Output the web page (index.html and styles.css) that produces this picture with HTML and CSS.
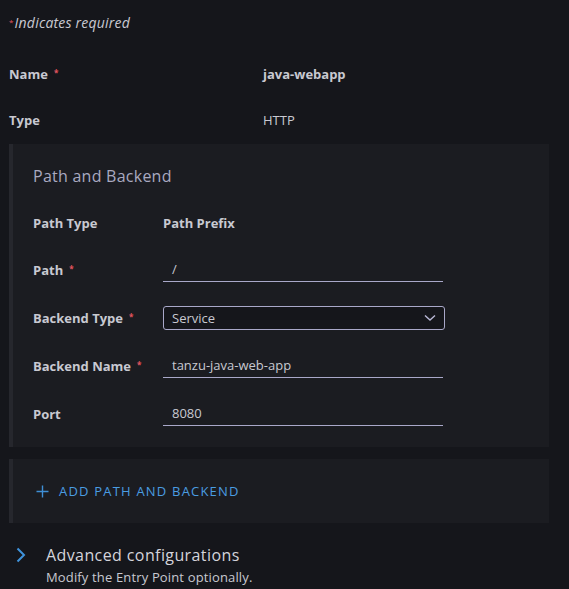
FILE: index.html
```html
<!DOCTYPE html>
<html>
<head>
<meta charset="utf-8">
<link rel="stylesheet" href="styles.css">
</head>
<body>
<div class="page">
  <p class="note"><span class="req">*</span>Indicates required</p>

  <div class="top-rows">
    <div class="row top">
      <span class="label">Name<span class="req label-req">*</span></span>
      <span class="value bold">java-webapp</span>
    </div>
    <div class="row top">
      <span class="label">Type</span>
      <span class="value">HTTP</span>
    </div>
  </div>

  <section class="panel main">
    <h2 class="panel-title">Path and Backend</h2>
    <div class="fields">
      <div class="row field first">
        <span class="label">Path Type</span>
        <span class="value bold">Path Prefix</span>
      </div>
      <div class="row field">
        <span class="label">Path<span class="req label-req">*</span></span>
        <span class="input">/</span>
      </div>
      <div class="row field">
        <span class="label">Backend Type<span class="req label-req">*</span></span>
        <span class="select">Service
          <svg class="caret" width="12" height="8" viewBox="0 0 12 8"><path d="M1 1.5 L6 6 L11 1.5" fill="none" stroke="#b9b8d6" stroke-width="1.4"/></svg>
        </span>
      </div>
      <div class="row field">
        <span class="label">Backend Name<span class="req label-req">*</span></span>
        <span class="input">tanzu-java-web-app</span>
      </div>
      <div class="row field">
        <span class="label">Port</span>
        <span class="input">8080</span>
      </div>
    </div>
  </section>

  <section class="panel add">
    <button class="add-btn">
      <svg width="13" height="13" viewBox="0 0 13 13"><path d="M6.5 0.5 V12.5 M0.5 6.5 H12.5" stroke="#3f8fd6" stroke-width="1.4"/></svg>
      <span>ADD PATH AND BACKEND</span>
    </button>
  </section>

  <div class="advanced">
    <svg class="chev" width="10" height="16" viewBox="0 0 10 16"><path d="M1.5 1.5 L8 8 L1.5 14.5" fill="none" stroke="#3f93dc" stroke-width="2"/></svg>
    <div class="adv-text">
      <div class="adv-title">Advanced configurations</div>
      <div class="adv-sub">Modify the Entry Point optionally.</div>
    </div>
  </div>
</div>
</body>
</html>
```

FILE: styles.css
```css
html, body {
  margin: 0;
  padding: 0;
  background: #15161b;
}
body {
  font-family: "Open Sans", "Noto Sans", sans-serif;
  color: #d2d2da;
  width: 569px;
  height: 589px;
  overflow: hidden;
}
.page {
  padding: 13px 20px 0 9px;
}
.note {
  margin: 0;
  font-size: 14px;
  line-height: 20px;
  font-style: italic;
  color: #c9c9d2;
  letter-spacing: 0.2px;
}
.req {
  color: #e3545f;
  font-size: 8px;
  font-style: normal;
  vertical-align: top;
  line-height: 17px;
  margin-right: 1px;
}
.label-req {
  margin-left: 6px;
}
.top-rows {
  margin-top: 31px;
  display: flex;
  flex-direction: column;
  gap: 26px;
}
.row {
  display: grid;
  align-items: center;
  height: 20px;
}
.row.top {
  grid-template-columns: 254px 1fr;
}
.label {
  font-size: 13px;
  font-weight: 700;
  color: #c8c9d1;
  line-height: 20px;
}
.value {
  font-size: 13px;
  color: #c8c9d1;
}
.value.bold {
  font-weight: 700;
}
.panel {
  background: #1b1c21;
  border-left: 4px solid #26272d;
}
.panel.main {
  margin-top: 14px;
  padding: 22px 0 21px 20px;
}
.panel-title {
  margin: 0;
  font-size: 16px;
  line-height: 20px;
  font-weight: 400;
  color: #a9a9c0;
  letter-spacing: 0.25px;
}
.fields {
  margin-top: 26px;
  display: flex;
  flex-direction: column;
  gap: 24px;
}
.row.field {
  grid-template-columns: 130px 280px;
  height: 24px;
}
.row.field.first {
  height: 22px;
}
.input {
  height: 24px;
  box-sizing: border-box;
  border-bottom: 1px solid #a9a8c9;
  padding: 0 9px;
  font-size: 13px;
  line-height: 23px;
  color: #c8c9d1;
}
.select {
  width: 282px;
  height: 24px;
  box-sizing: border-box;
  border: 1px solid #a9a8c9;
  border-radius: 3px;
  background: #15161b;
  padding: 0 8px;
  font-size: 13px;
  line-height: 22px;
  color: #c8c9d1;
  display: flex;
  align-items: center;
  justify-content: space-between;
}
.panel.add {
  margin-top: 12px;
  height: 64px;
  display: flex;
  align-items: center;
  padding-left: 23px;
}
.add-btn {
  background: none;
  border: 0;
  padding: 0;
  display: flex;
  align-items: center;
  gap: 10px;
  font-family: inherit;
  font-size: 13px;
  letter-spacing: 1.2px;
  color: #4a9de2;
}
.advanced {
  margin-top: 22px;
  display: flex;
  align-items: flex-start;
  gap: 20px;
  padding-left: 7px;
}
.chev {
  margin-top: 2px;
}
.adv-title {
  font-size: 16px;
  line-height: 20px;
  color: #d4d4dc;
  font-weight: 500;
  letter-spacing: 0.4px;
}
.adv-sub {
  margin-top: 3px;
  font-size: 13px;
  line-height: 18px;
  color: #c8c9d1;
  letter-spacing: 0.15px;
}
```
